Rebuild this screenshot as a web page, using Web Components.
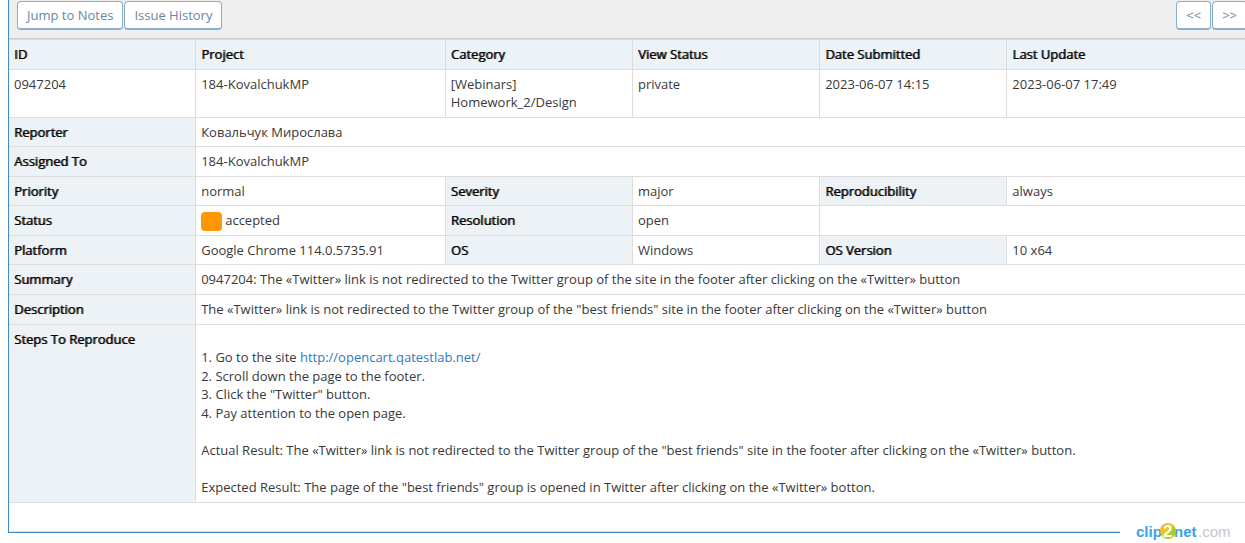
<!DOCTYPE html>
<html lang="en">
<head>
<meta charset="utf-8">
<title>0947204</title>
<style>
body{margin:0;overflow:hidden;background:#fff;font:13px "Open Sans","Noto Sans",sans-serif;line-height:18px;color:#393939}
</style>
</head>
<body>
<issue-page></issue-page>
<script>
class ToolButton extends HTMLElement{
  connectedCallback(){
    this.attachShadow({mode:'open'}).innerHTML=`<style>
:host{display:block}
button{display:block;height:29px;padding:0 9px 1px;margin:0;border:1px solid #8aafce;border-bottom-width:2px;border-radius:4px;background:#fff;color:#6688a6;font:inherit;line-height:18px;white-space:nowrap}
</style><button type="button"><slot></slot></button>`;
  }
}
customElements.define('tool-button',ToolButton);

class IssueToolbar extends HTMLElement{
  connectedCallback(){
    this.attachShadow({mode:'open'}).innerHTML=`<style>
:host{display:flex;justify-content:space-between;padding:1px 10px 8px 8px;background:#eee;border-bottom:1px solid #ccc}
div{display:flex;gap:1px}
</style><div><slot></slot></div><div><slot name="nav"></slot></div>`;
  }
}
customElements.define('issue-toolbar',IssueToolbar);

class StatusLabel extends HTMLElement{
  connectedCallback(){
    this.attachShadow({mode:'open'}).innerHTML=`<style>
:host{display:flex;align-items:flex-start;gap:3px;height:18px}
i{width:21px;height:19px;margin-top:1px;border-radius:4px;background:#ff9800}
</style><i></i><span><slot></slot></span>`;
  }
}
customElements.define('status-label',StatusLabel);

class IssueTable extends HTMLElement{
  connectedCallback(){
    this.attachShadow({mode:'open'}).innerHTML=`<style>
:host{display:block}
table{width:100%;table-layout:fixed;border-collapse:separate;border-spacing:0;border-top:1px solid #ddd}
.n{width:15%}.w{width:20%}
tr{height:30px}
tr:nth-child(2){height:48px}
tr:nth-child(3),tr:nth-child(5),tr:nth-child(7),tr:last-child{height:29px}
tr:nth-child(10){height:178px}
th,td{box-sizing:border-box;padding:5px;border:0 solid #ddd;border-width:0 1px 1px 0;vertical-align:top;text-align:left;font-weight:400}
th{background:#ecf2f5;color:#000;text-shadow:1px 0 rgba(0,0,0,.7)}
a{color:#337ab7;text-decoration:none}
.steps span{display:block;min-height:18px}
.steps span:nth-child(even){padding-bottom:1px}
</style>
<table>
<colgroup><col class="n"><col class="w"><col class="n"><col class="n"><col class="n"><col class="w"></colgroup>
<tbody>
<tr><th>ID</th><th>Project</th><th>Category</th><th>View Status</th><th>Date Submitted</th><th>Last Update</th></tr>
<tr><td>0947204</td><td>184-KovalchukMP</td><td>[Webinars] Homework_2/Design</td><td>private</td><td>2023-06-07 14:15</td><td>2023-06-07 17:49</td></tr>
<tr><th>Reporter</th><td colspan="5">Ковальчук Мирослава</td></tr>
<tr><th>Assigned To</th><td colspan="5">184-KovalchukMP</td></tr>
<tr><th>Priority</th><td>normal</td><th>Severity</th><td>major</td><th>Reproducibility</th><td>always</td></tr>
<tr><th>Status</th><td><status-label>accepted</status-label></td><th>Resolution</th><td>open</td><td colspan="2"></td></tr>
<tr><th>Platform</th><td>Google Chrome 114.0.5735.91</td><th>OS</th><td>Windows</td><th>OS Version</th><td>10 x64</td></tr>
<tr><th>Summary</th><td colspan="5">0947204: The «Twitter» link is not redirected to the Twitter group of the site in the footer after clicking on the «Twitter» button</td></tr>
<tr><th>Description</th><td colspan="5">The «Twitter» link is not redirected to the Twitter group of the "best friends" site in the footer after clicking on the «Twitter» button</td></tr>
<tr><th>Steps To Reproduce</th><td colspan="5" class="steps"><span></span><span>1. Go to the site <a href="http://opencart.qatestlab.net/">http://opencart.qatestlab.net/</a></span><span>2. Scroll down the page to the footer.</span><span>3. Click the "Twitter" button.</span><span>4. Pay attention to the open page.</span><span></span><span>Actual Result: The «Twitter» link is not redirected to the Twitter group of the "best friends" site in the footer after clicking on the «Twitter» button.</span><span></span><span>Expected Result: The page of the "best friends" group is opened in Twitter after clicking on the «Twitter» botton.</span></td></tr>
<tr><td colspan="6"></td></tr>
</tbody></table>`;
  }
}
customElements.define('issue-table',IssueTable);

class ClipMark extends HTMLElement{
  connectedCallback(){
    this.attachShadow({mode:'open'}).innerHTML=`<style>
:host{display:block;width:125px;height:24px;background:#fff}
svg{display:block}
text{font-family:"Liberation Sans",Arial,sans-serif;font-size:15px}
.two{font-size:17px}
</style><svg width="125" height="24" viewBox="0 0 125 24">
<defs><linearGradient id="g" x1="0" y1="0" x2="1" y2="1"><stop offset="0" stop-color="#ff8a1c"/><stop offset=".35" stop-color="#f6c61c"/><stop offset=".65" stop-color="#9ed320"/><stop offset="1" stop-color="#f0b41c"/></linearGradient></defs>
<text x="16" y="18" fill="#3ba3e4" font-weight="700">clip</text>
<text x="54" y="18" fill="#3ba3e4" font-weight="700">net</text>
<circle cx="48" cy="12" r="8" fill="url(#g)"/>
<text class="two" x="43" y="18" fill="#fff" font-weight="700">2</text>
<text x="78" y="18" fill="#c4c6cd">.com</text>
</svg>`;
  }
}
customElements.define('clip-mark',ClipMark);

class IssuePage extends HTMLElement{
  connectedCallback(){
    this.attachShadow({mode:'open'}).innerHTML=`<style>
:host{display:block;position:relative;padding-bottom:10px}
main{margin:0 -13px 0 8px;border:1px solid #428bca;border-top:0}
clip-mark{position:absolute;right:0;bottom:0}
</style>
<main>
<issue-toolbar><tool-button>Jump to Notes</tool-button><tool-button>Issue History</tool-button><tool-button slot="nav">&lt;&lt;</tool-button><tool-button slot="nav">&gt;&gt;</tool-button></issue-toolbar>
<issue-table></issue-table>
</main>
<clip-mark></clip-mark>`;
  }
}
customElements.define('issue-page',IssuePage);
</script>
</body>
</html>
